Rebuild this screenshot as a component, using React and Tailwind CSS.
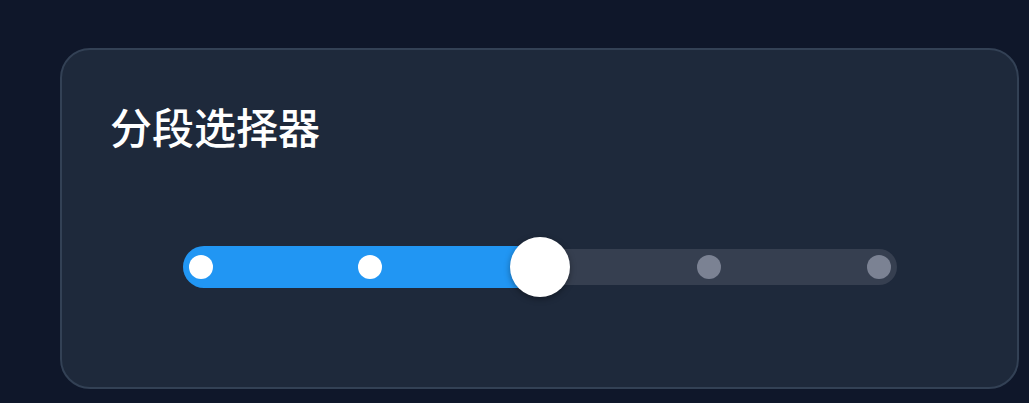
import React, { useState } from 'react';

const STEPS = [0, 1, 2, 3, 4];
const TRACK_W = 714;
const PAD = 18;

const SegmentSlider = () => {
    const [value, setValue] = useState(2);
    const step = (TRACK_W - PAD * 2) / (STEPS.length - 1);
    const pos = (i) => PAD + i * step;

    return (
        <div className="relative mx-auto w-[714px] h-[60px] flex items-center">
            {/* base track */}
            <div className="w-full h-[36px] rounded-full bg-[#363f50]" />
            {/* filled part */}
            <div
                className="absolute left-0 top-[9px] h-[42px] rounded-l-full bg-[#2196f3]"
                style={{ width: pos(value) }}
            />
            {STEPS.map((i) => (
                <button
                    key={i}
                    onClick={() => setValue(i)}
                    className={`absolute top-[18px] w-[24px] h-[24px] -ml-[12px] rounded-full ${i <= value ? 'bg-white' : 'bg-[#7b8293]'}`}
                    style={{ left: pos(i) }}
                />
            ))}
            <div
                className="absolute top-0 w-[60px] h-[60px] -ml-[30px] rounded-full bg-white shadow-[0_2px_6px_rgba(0,0,0,0.35)]"
                style={{ left: pos(value) }}
            />
        </div>
    );
};

export default function App() {
    return (
        <div className="min-h-[403px] bg-[#0f172a] pt-[48px] pl-[60px] font-['Noto_Sans_CJK_SC',sans-serif]">
            <div className="w-[959px] h-[341px] rounded-[30px] border-2 border-[#334155] bg-[#1e293b] px-[48px] pt-[44px]">
                <h2 className="text-[42px] leading-[1.5] text-white font-medium">分段选择器</h2>
                <div className="mt-[80px]">
                    <SegmentSlider />
                </div>
            </div>
        </div>
    );
}
